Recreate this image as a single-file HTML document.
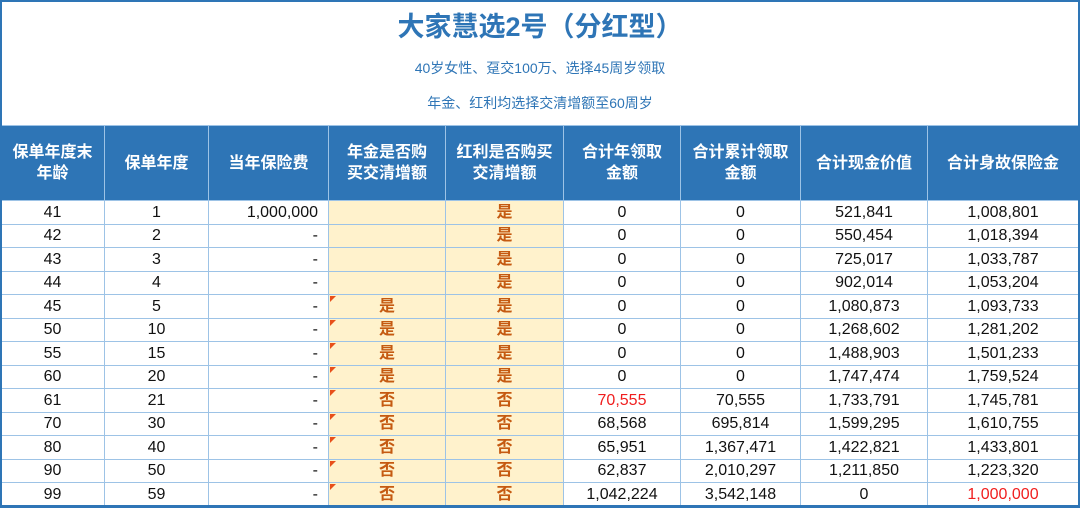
<!DOCTYPE html>
<html><head><meta charset="utf-8"><style>
*{margin:0;padding:0;box-sizing:border-box}
body{width:1080px;height:508px;overflow:hidden;background:#fff;font-family:"Liberation Sans","Noto Sans CJK SC",sans-serif}
.wrap{position:absolute;left:0;top:0;width:1080px;height:508px;border:2px solid #2E75B6;border-bottom-width:3px;z-index:2}
.t1{position:absolute;top:5px;left:0;width:100%;text-align:center;font-size:27px;font-weight:bold;color:#2E75B6}
.t2{position:absolute;top:58px;left:0;width:100%;text-align:center;font-size:14px;color:#2E75B6}
.t3{position:absolute;top:93px;left:0;width:100%;text-align:center;font-size:14px;color:#2E75B6}
table{position:absolute;left:0;top:125px;border-collapse:collapse;table-layout:fixed;width:1078px}
th{background:#2E75B6;color:#fff;font-size:16px;font-weight:bold;height:75px;border:1px solid #9DC3E6;line-height:21px;padding:0 2px}
td{height:23.5px;border:1px solid #9DC3E6;font-size:16px;text-align:center;color:#111;padding:0;position:relative;line-height:19px}
td.r{text-align:right;padding-right:10px}
td.y{background:#FFF2CC;color:#C55A11;font-weight:bold;font-size:16px}
td.m::before{content:"";position:absolute;left:1px;top:1px;border-top:6px solid #E8501A;border-right:6px solid transparent}
.red{color:#F01E1E}
</style></head><body>
<div class="wrap"></div>
<div class="t1">大家慧选2号（分红型）</div>
<div class="t2">40岁女性、趸交100万、选择45周岁领取</div>
<div class="t3">年金、红利均选择交清增额至60周岁</div>
<table>
<colgroup><col style="width:104px"><col style="width:104px"><col style="width:120px"><col style="width:117px"><col style="width:118px"><col style="width:117px"><col style="width:120px"><col style="width:127px"><col style="width:151px"></colgroup>
<tr><th>保单年度末<br>年龄</th><th>保单年度</th><th>当年保险费</th><th>年金是否购<br>买交清增额</th><th>红利是否购买<br>交清增额</th><th>合计年领取<br>金额</th><th>合计累计领取<br>金额</th><th>合计现金价值</th><th>合计身故保险金</th></tr>
<tr><td>41</td><td>1</td><td class="r">1,000,000</td><td class="y"></td><td class="y">是</td><td>0</td><td>0</td><td>521,841</td><td>1,008,801</td></tr>
<tr><td>42</td><td>2</td><td class="r">-</td><td class="y"></td><td class="y">是</td><td>0</td><td>0</td><td>550,454</td><td>1,018,394</td></tr>
<tr><td>43</td><td>3</td><td class="r">-</td><td class="y"></td><td class="y">是</td><td>0</td><td>0</td><td>725,017</td><td>1,033,787</td></tr>
<tr><td>44</td><td>4</td><td class="r">-</td><td class="y"></td><td class="y">是</td><td>0</td><td>0</td><td>902,014</td><td>1,053,204</td></tr>
<tr><td>45</td><td>5</td><td class="r">-</td><td class="y m">是</td><td class="y">是</td><td>0</td><td>0</td><td>1,080,873</td><td>1,093,733</td></tr>
<tr><td>50</td><td>10</td><td class="r">-</td><td class="y m">是</td><td class="y">是</td><td>0</td><td>0</td><td>1,268,602</td><td>1,281,202</td></tr>
<tr><td>55</td><td>15</td><td class="r">-</td><td class="y m">是</td><td class="y">是</td><td>0</td><td>0</td><td>1,488,903</td><td>1,501,233</td></tr>
<tr><td>60</td><td>20</td><td class="r">-</td><td class="y m">是</td><td class="y">是</td><td>0</td><td>0</td><td>1,747,474</td><td>1,759,524</td></tr>
<tr><td>61</td><td>21</td><td class="r">-</td><td class="y m">否</td><td class="y">否</td><td class="red">70,555</td><td>70,555</td><td>1,733,791</td><td>1,745,781</td></tr>
<tr><td>70</td><td>30</td><td class="r">-</td><td class="y m">否</td><td class="y">否</td><td>68,568</td><td>695,814</td><td>1,599,295</td><td>1,610,755</td></tr>
<tr><td>80</td><td>40</td><td class="r">-</td><td class="y m">否</td><td class="y">否</td><td>65,951</td><td>1,367,471</td><td>1,422,821</td><td>1,433,801</td></tr>
<tr><td>90</td><td>50</td><td class="r">-</td><td class="y m">否</td><td class="y">否</td><td>62,837</td><td>2,010,297</td><td>1,211,850</td><td>1,223,320</td></tr>
<tr><td>99</td><td>59</td><td class="r">-</td><td class="y m">否</td><td class="y">否</td><td>1,042,224</td><td>3,542,148</td><td>0</td><td class="red">1,000,000</td></tr>
</table>
</body></html>
